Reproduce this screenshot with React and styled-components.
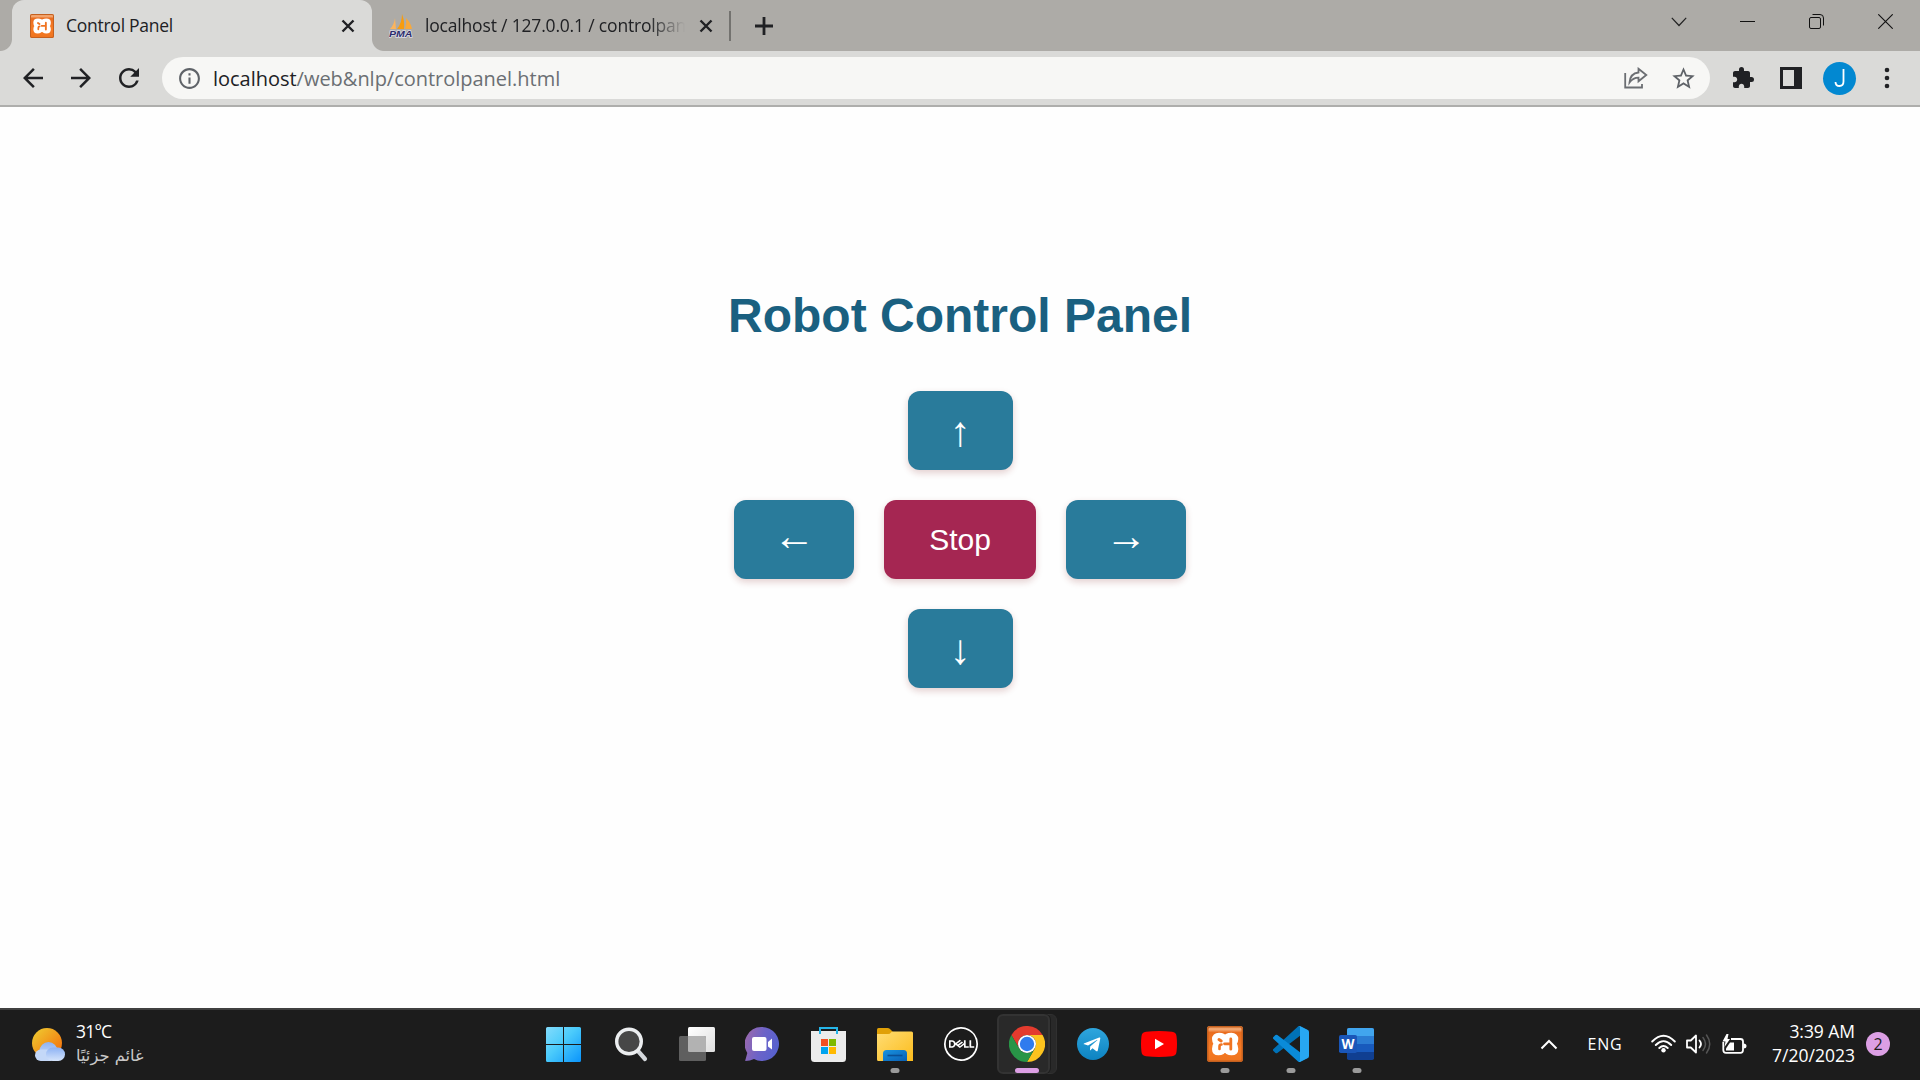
import React from "react";
import styled, { createGlobalStyle, css } from "styled-components";
import {
  MdArrowBack,
  MdArrowForward,
  MdRefresh,
  MdInfoOutline,
  MdStarBorder,
  MdExtension,
} from "react-icons/md";
import { FaTelegramPlane } from "react-icons/fa";
import { SiDell } from "react-icons/si";

const Global = createGlobalStyle`
  * { box-sizing: border-box; }
  body { margin: 0; background: #fff; overflow: hidden; }
  svg { display: block; flex: none; }
`;

const uiFont = `"Open Sans", "Noto Sans", "DejaVu Sans", sans-serif`;

const Screen = styled.div`
  width: 1920px;
  height: 1080px;
  display: flex;
  flex-direction: column;
  font-family: ${uiFont};
`;

/* ---------- browser chrome ---------- */
const TabStrip = styled.div`
  height: 51px;
  background: #adaba7;
  display: flex;
  padding-left: 12px;
  flex: none;
`;

const Tab = styled.div`
  position: relative;
  width: ${(p) => (p.$active ? 360 : 357)}px;
  height: 51px;
  display: flex;
  align-items: center;
  padding: 0 ${(p) => (p.$active ? 15 : 14)}px 0 ${(p) => (p.$active ? 18 : 17)}px;
  color: #202124;
  ${(p) =>
    p.$active &&
    css`
      background: #dadad8;
      border-radius: 12px 12px 0 0;
      &::before,
      &::after {
        content: "";
        position: absolute;
        bottom: 0;
        width: 12px;
        height: 12px;
      }
      &::before {
        left: -12px;
        background: radial-gradient(circle at 0 0, transparent 11.5px, #dadad8 12.5px);
      }
      &::after {
        right: -12px;
        background: radial-gradient(circle at 100% 0, transparent 11.5px, #dadad8 12.5px);
      }
    `}
`;

const TabTitle = styled.span`
  flex: 1;
  margin: 0 12px 0 12px;
  font-size: 17.5px;
  line-height: 51px;
  letter-spacing: ${(p) => p.$spacing}px;
  white-space: nowrap;
  overflow: hidden;
  ${(p) =>
    p.$fade &&
    css`
      mask-image: linear-gradient(to right, #000 86%, transparent 100%);
    `}
`;

const TabClose = styled.span`
  width: 18px;
  display: flex;
  justify-content: center;
`;

const TabDivider = styled.span`
  width: 2px;
  height: 30px;
  margin-top: 11px;
  background: #73726f;
`;

const NewTab = styled.span`
  width: 65px;
  height: 51px;
  display: flex;
  align-items: center;
  justify-content: center;
`;

const WindowControls = styled.div`
  margin-left: auto;
  display: flex;
`;

const WindowButton = styled.span`
  width: 69px;
  height: 43px;
  display: flex;
  align-items: center;
  justify-content: center;
`;

const Toolbar = styled.div`
  height: 56px;
  flex: none;
  display: flex;
  align-items: center;
  padding: 0 9px;
  background: #dadad8;
  border-bottom: 2px solid #aeaeac;
`;

const ToolButton = styled.span`
  width: 48px;
  height: 42px;
  display: flex;
  align-items: center;
  justify-content: center;
  color: #202124;
`;

const AddressBar = styled.div`
  flex: 1;
  height: 42px;
  margin: 0 9px;
  padding: 0 4px 0 15px;
  border-radius: 21px;
  background: #f7f7f5;
  display: flex;
  align-items: center;
  color: #5f6368;
`;

const Url = styled.span`
  flex: 1;
  margin-left: 11px;
  font-size: 20px;
  line-height: 42px;
  padding-top: 1px;
  letter-spacing: -0.02px;
  color: #6b6f73;
  b {
    font-weight: 400;
    color: #202124;
  }
`;

const BarIcon = styled.span`
  width: ${(p) => p.$w || 48}px;
  display: flex;
  justify-content: center;
`;

const Avatar = styled.span`
  width: 33px;
  height: 33px;
  border-radius: 50%;
  background: #0288d1;
  display: flex;
  align-items: center;
  justify-content: center;
`;

/* ---------- page ---------- */
const Page = styled.main`
  flex: 1;
  display: flex;
  flex-direction: column;
  align-items: center;
  padding-top: 181px;
  background: #fefefe;
  font-family: "Liberation Sans", Arial, sans-serif;
`;

const Title = styled.h1`
  margin: 0 0 48px;
  font-size: 48px;
  line-height: 55px;
  color: #1a6080;
`;

const Pad = styled.div`
  display: flex;
  flex-direction: column;
  align-items: center;
  gap: 30px;
`;

const PadRow = styled.div`
  display: flex;
  gap: 30px;
`;

const PadButton = styled.button`
  display: flex;
  align-items: center;
  justify-content: center;
  width: 120px;
  height: 79px;
  padding: 0 0 8px;
  border: 0;
  border-radius: 12px;
  background: #297b9b;
  color: #fff;
  font: 42px/46px "Liberation Sans", Arial, sans-serif;
  box-shadow: 0 3px 7px rgba(120, 20, 20, 0.2);
`;

const VerticalButton = styled(PadButton)`
  width: 105px;
  padding: 2px 0 0;
`;

const StopButton = styled(PadButton)`
  width: 152px;
  padding: 0;
  background: #a52652;
  font-size: 30px;
`;

/* ---------- taskbar ---------- */
const Taskbar = styled.footer`
  height: 72px;
  flex: none;
  display: grid;
  grid-template-columns: 532px 858px 1fr;
  background: #1c1c1c;
  border-top: 2px solid #404040;
  color: #fff;
`;

const Weather = styled.div`
  display: flex;
  align-items: center;
  height: 69px;
  padding: 0 0 0 32px;
  gap: 10px;
`;

const Stack = styled.div`
  display: flex;
  flex-direction: column;
  align-items: ${(p) => p.$align || "flex-start"};
  padding-bottom: 2px;
  font-size: 17.5px;
  line-height: 24px;
`;

const Line = styled.span`
  letter-spacing: ${(p) => p.$spacing || 0}px;
  white-space: nowrap;
`;

const Arabic = styled.span`
  padding-top: 1px;
  font: 16.3px/24px "DejaVu Sans", sans-serif;
  color: #c8c8c8;
`;

const Apps = styled.div`
  display: grid;
  grid-template-columns: repeat(13, 66px);
`;

const AppCell = styled.div`
  position: relative;
  height: 70px;
  display: flex;
  align-items: center;
  justify-content: center;
  padding-bottom: 2px;
  padding-right: ${(p) => (p.$nudge || 0) * 2}px;
`;

const Indicator = styled.i`
  position: absolute;
  bottom: 7px;
  left: 50%;
  transform: translateX(-50%);
  width: ${(p) => (p.$active ? 24 : 9)}px;
  height: 5px;
  border-radius: 3px;
  background: ${(p) => (p.$active ? "#dc9fe4" : "#9a9a9a")};
`;

const ActivePlate = styled.i`
  position: absolute;
  top: 4px;
  left: 3px;
  width: 53px;
  height: 60px;
  border-radius: 6px;
  background: #292929;
  border: 2px solid #333;
  box-shadow: 1px 0 0 #1c1c1c;
`;

const BackPlate = styled.i`
  position: absolute;
  top: 4px;
  left: 20px;
  width: 43px;
  height: 60px;
  border-radius: 6px;
  background: #292929;
  border: 1px solid #303030;
`;

const AppGlyph = styled.span`
  position: relative;
  display: flex;
`;

const XamppTile = styled.span`
  width: ${(p) => p.$size}px;
  height: ${(p) => p.$size}px;
  display: flex;
  align-items: center;
  justify-content: center;
  border-radius: ${(p) => p.$size / 12}px;
  background: linear-gradient(#ef9a5f 0, #f3a873 10%, #ea6d1f 18%, #f77b24 60%, #ee7420 100%);
  box-shadow: inset 0 0 0 ${(p) => p.$size / 24}px #c4601f;
`;

const Tray = styled.div`
  display: flex;
  align-items: center;
  height: 68px;
  padding-left: 150px;
`;

const TrayItem = styled.span`
  width: ${(p) => p.$w}px;
  display: flex;
  justify-content: center;
`;

const Clock = styled(Stack)`
  width: 109px;
`;

const Badge = styled.span`
  width: 24px;
  height: 24px;
  margin-left: 11px;
  border-radius: 50%;
  background: #dc9fe4;
  color: #1c1c1c;
  font-size: 16px;
  line-height: 24px;
  text-align: center;
`;

/* ---------- drawings ---------- */
const Cross = () => (
  <svg width="14" height="14" viewBox="0 0 14 14">
    <path d="M1.500 1.500l11 11M12.500 1.500l-11 11" stroke="#202124" strokeWidth="2.400" />
  </svg>
);

const Xampp = ({ size }) => (
  <XamppTile $size={size}>
    <svg width={size} height={size} viewBox="0 0 36 36">
      <path
        d="M18 12.500C17 9.500 14.500 9 12 9C8.800 9 7.300 10.800 7.300 13C7.300 15.500 8 16.500 9 18C7.500 19.500 7.300 21 7.300 23C7.300 25.700 9 27 11.500 27C14.500 27 16.500 26 18 22.800C19.500 26 21.500 27 24.500 27C27.300 27 29 25.700 29 23C29 21 28.700 19.500 27.200 18C28.200 16.500 29 15.500 29 13C29 10.800 27.200 9 24.500 9C21.500 9 19 9.500 18 12.500Z"
        fill="#fff"
        stroke="#fff"
        strokeWidth="4.600"
        strokeLinejoin="round"
      />
      <g fill="none" stroke="#f07422" strokeLinecap="round" strokeLinejoin="round">
        <path d="M12 13.500L14.200 15" strokeWidth="3" />
        <path d="M12.500 23V20.500Q12.500 18.500 14.500 18.500" strokeWidth="2.600" />
        <path d="M17.500 17.800H23.500M23.800 13V23.200" strokeWidth="2.800" />
      </g>
    </svg>
  </XamppTile>
);

const PmaIcon = () => (
  <svg width="24" height="24" viewBox="0 0 24 24">
    <path d="M6 4L7 15H1Q5 11 6 4Z" fill="#fbb45c" />
    <path d="M13 0Q16 8 15 15H8Q13 9 13 0Z" fill="#f89c0e" />
    <path d="M17 4Q22 9 23 15H16Q18 9 17 4Z" fill="#f9a93a" />
    <text x="0" y="22.500" textLength="23.500" lengthAdjust="spacingAndGlyphs" fontFamily="Liberation Sans, sans-serif" fontSize="9.500" fontWeight="700" fontStyle="italic" fill="#2c2c6c" stroke="#dcdce6" strokeWidth="1.400" paintOrder="stroke">PMA</text>
  </svg>
);

const ShareIcon = () => (
  <svg width="24" height="22" viewBox="0 0 24 22" fill="none" stroke="#6b6e72" strokeWidth="1.800">
    <path d="M1.200 6V20.500H18V17" />
    <path d="M14.500 1.800L22.300 8L14.500 14.300V10.600C10.500 10.600 8 12 5.500 15.500C6 9.500 9.500 6 14.500 5.500Z" />
  </svg>
);

const WeatherIcon = () => (
  <svg width="34" height="34" viewBox="0 0 34 34">
    <defs>
      <linearGradient id="sun" x1="0" y1="0" x2="1" y2="1">
        <stop offset="0.1" stopColor="#efc52e" />
        <stop offset="0.9" stopColor="#f4700c" />
      </linearGradient>
      <linearGradient id="cloud" x1="0" y1="0" x2="0" y2="1">
        <stop offset="0" stopColor="#8db2f4" />
        <stop offset="1" stopColor="#d5e4fb" />
      </linearGradient>
    </defs>
    <circle cx="15" cy="15" r="15" fill="url(#sun)" />
    <circle cx="16.500" cy="23" r="9" fill="url(#cloud)" />
    <rect x="3" y="21.500" width="21" height="11.500" rx="5.700" fill="#c4d8f8" />
    <rect x="14" y="19.500" width="19" height="13.500" rx="6.700" fill="url(#cloud)" />
  </svg>
);

const StartIcon = () => (
  <svg width="35" height="35" viewBox="0 0 35 35">
    <defs>
      <linearGradient id="win" gradientUnits="userSpaceOnUse" x1="0" y1="0" x2="35" y2="35">
        <stop offset="0" stopColor="#83dcfc" />
        <stop offset="0.45" stopColor="#4bcbfb" />
        <stop offset="1" stopColor="#0a94fb" />
      </linearGradient>
    </defs>
    <path fill="url(#win)" d="M1.500 0H17V17H0V1.500Q0 0 1.500 0ZM18 0H33.500Q35 0 35 1.500V17H18ZM0 18H17V35H1.500Q0 35 0 33.500ZM18 18H35V33.500Q35 35 33.500 35H18Z" />
  </svg>
);

const SearchIcon = () => (
  <svg width="33" height="35" viewBox="0 0 33 35">
    <path d="M23 24L30 32" stroke="#d4d8dc" strokeWidth="4.200" strokeLinecap="round" />
    <circle cx="14" cy="14.500" r="12.300" fill="#474747" stroke="#eceef0" strokeWidth="3.400" />
  </svg>
);

const TaskViewIcon = () => (
  <svg width="36" height="34" viewBox="0 0 36 34">
    <defs>
      <linearGradient id="tv" x1="0" y1="0" x2="1" y2="1">
        <stop offset="0" stopColor="#fff" />
        <stop offset="1" stopColor="#dedede" />
      </linearGradient>
    </defs>
    <rect x="9" y="0" width="27" height="25" rx="1.500" fill="url(#tv)" />
    <rect x="0" y="9" width="27" height="25" rx="1.500" fill="#5f5f5f" />
    <path d="M9 9H25.500Q27 9 27 10.500V25H10.500Q9 25 9 23.500Z" fill="#b2b2b2" />
  </svg>
);

const ChatIcon = () => (
  <svg width="34" height="34" viewBox="0 0 34 34">
    <defs>
      <linearGradient id="chat" x1="0" y1="0.300" x2="1" y2="0.600">
        <stop offset="0" stopColor="#9968ad" />
        <stop offset="0.500" stopColor="#6c63c8" />
        <stop offset="1" stopColor="#5561cf" />
      </linearGradient>
    </defs>
    <path d="M17 0A17 17 0 1 1 9 32Q5 34 0.500 34Q0 33.500 0.500 32.500L2.300 26A17 17 0 0 1 17 0Z" fill="url(#chat)" />
    <rect x="7" y="10" width="14.500" height="14" rx="2" fill="#fff" />
    <path d="M23 15L27 11.500V22.500L23 19.500Z" fill="#fff" />
  </svg>
);

const StoreIcon = () => (
  <svg width="35" height="35" viewBox="0 0 35 35">
    <path d="M0 4H35V31.500Q35 35 31.500 35H3.500Q0 35 0 31.500Z" fill="#ececec" />
    <path d="M9 7V1H26V7" fill="none" stroke="#25b5e8" strokeWidth="2" />
    <rect x="10" y="12" width="7" height="7" fill="#f25022" />
    <rect x="18" y="12" width="7" height="7" fill="#7fba00" />
    <rect x="10" y="20" width="7" height="7" fill="#00a4ef" />
    <rect x="18" y="20" width="7" height="7" fill="#ffb900" />
  </svg>
);

const FolderIcon = () => (
  <svg width="36" height="33" viewBox="0 0 36 33">
    <defs>
      <linearGradient id="fold" x1="0" y1="0" x2="1" y2="1">
        <stop offset="0" stopColor="#ffdd74" />
        <stop offset="1" stopColor="#fcbc1c" />
      </linearGradient>
      <linearGradient id="foldb" x1="0" y1="0" x2="1" y2="1">
        <stop offset="0" stopColor="#1893e0" />
        <stop offset="1" stopColor="#0a5fb4" />
      </linearGradient>
    </defs>
    <path d="M0 1.500Q0 0 1.500 0H10.500Q12 0 13 1L16 4V8H0Z" fill="#e0a007" />
    <path d="M0 6H11Q13 6 14 4.500Q15 3.500 16 3.500H34.500Q36 3.500 36 5V33H1.500Q0 33 0 31.500Z" fill="url(#fold)" />
    <path d="M6 33V25.500Q6 22 9.500 22H26.500Q30 22 30 25.500V33Z" fill="url(#foldb)" />
    <path d="M10.500 27.500H25.500" stroke="#0a4f95" strokeWidth="1.600" />
  </svg>
);

const ChromeIcon = () => (
  <svg width="36" height="36" viewBox="0 0 36 36">
    <path d="M2.400 9A18 18 0 0 1 33.600 9H18A9 9 0 0 0 10.200 22.500Z" fill="#e33b2e" />
    <path d="M33.600 9A18 18 0 0 1 18 36L25.800 22.500A9 9 0 0 0 18 9Z" fill="#fcc31e" />
    <path d="M18 36A18 18 0 0 1 2.400 9L10.200 22.500A9 9 0 0 0 25.800 22.500Z" fill="#289547" />
    <circle cx="18" cy="18" r="9" fill="#fff" />
    <circle cx="18" cy="18" r="7.200" fill="#2f7bee" />
  </svg>
);

const TelegramIcon = () => (
  <svg width="32" height="32" viewBox="0 0 32 32">
    <defs>
      <linearGradient id="tg" x1="0" y1="0" x2="0" y2="1">
        <stop offset="0" stopColor="#2fa6de" />
        <stop offset="1" stopColor="#0d83c1" />
      </linearGradient>
    </defs>
    <circle cx="16" cy="16" r="16" fill="url(#tg)" />
    <g transform="translate(5.500 7)">
      <FaTelegramPlane size={19} color="#fff" />
    </g>
  </svg>
);

const YouTubeIcon = () => (
  <svg width="36" height="26" viewBox="0 0 36 26">
    <path d="M5 .8Q18-.6 31 .8Q35 1.200 35.500 5Q36.500 13 35.500 21Q35 24.800 31 25.200Q18 26.600 5 25.200Q1 24.800.5 21Q-.5 13 .5 5Q1 1.200 5 .8Z" fill="#f00" />
    <path d="M14 7.800V18.200L23 13Z" fill="#fff" />
  </svg>
);

const CodeIcon = () => (
  <svg width="36" height="36" viewBox="0 0 100 100">
    <path fill="#0072b8" d="M96.461 10.796L75.857.876A6.230 6.230 0 0 0 68.750 2.083L1.299 63.583A4.167 4.167 0 0 0 1.303 69.745L6.813 74.754A4.167 4.167 0 0 0 12.134 74.991L93.361 13.370C96.086 11.303 100 13.246 100 16.667V16.427A6.250 6.250 0 0 0 96.461 10.796Z" />
    <path fill="#0a8bd9" d="M96.461 89.204L75.857 99.124A6.230 6.230 0 0 1 68.750 97.917L1.299 36.417A4.167 4.167 0 0 1 1.303 30.255L6.813 25.246A4.167 4.167 0 0 1 12.134 25.009L93.361 86.630C96.086 88.697 100 86.754 100 83.333V83.573A6.250 6.250 0 0 1 96.461 89.204Z" />
    <path fill="#27a7f2" d="M75.858 99.126A6.230 6.230 0 0 1 68.750 97.917C71.056 100.223 75 98.590 75 95.328V4.672C75 1.410 71.056-.223 68.750 2.083A6.230 6.230 0 0 1 75.858.874L96.459 10.781A6.250 6.250 0 0 1 100 16.413V83.587A6.250 6.250 0 0 1 96.459 89.220Z" />
  </svg>
);

const WordIcon = () => (
  <svg width="35" height="32" viewBox="0 0 35 32">
    <rect x="8" y="0" width="27" height="32" rx="1.800" fill="#103f91" />
    <path d="M8 8V1.800Q8 0 9.800 0H33.200Q35 0 35 1.800V8Z" fill="#41a5ee" />
    <rect x="8" y="8" width="27" height="8" fill="#2b7cd3" />
    <rect x="8" y="16" width="27" height="8" fill="#185abd" />
    <rect x="0" y="7" width="18" height="18" rx="1.800" fill="#1a56b8" />
    <text x="9" y="20.500" textAnchor="middle" textLength="13" lengthAdjust="spacingAndGlyphs" fontFamily="Open Sans, sans-serif" fontSize="13.500" fontWeight="700" fill="#fff">W</text>
  </svg>
);

const WifiIcon = () => (
  <svg width="25" height="20" viewBox="0 0 25 20" fill="none" stroke="#fff" strokeWidth="1.900" strokeLinecap="round">
    <path d="M1.200 7.500Q12.500-4 23.800 7.500M4.800 11Q12.500 3.200 20.200 11M8.300 14Q12.500 10 16.700 14" />
    <circle cx="12.500" cy="16.300" r="2.200" fill="#fff" stroke="none" />
  </svg>
);

const SpeakerIcon = () => (
  <svg width="25" height="22" viewBox="0 0 25 22" fill="none" stroke="#fff" strokeWidth="1.800" strokeLinejoin="round" strokeLinecap="round">
    <path d="M1 7.500H4.800L10 2.500V19.500L4.800 14.500H1Z" />
    <path d="M13.500 7.500Q16.500 11 13.500 14.500" />
    <path d="M17 4.500Q22 11 17 17.500M20.500 2Q27 11 20.500 20" stroke="#555" strokeWidth="1.500" />
  </svg>
);

const BatteryIcon = () => (
  <svg width="25" height="21" viewBox="0 0 25 21">
    <path d="M9 5H18.500Q21 5 21 7.500V16Q21 18.800 18.500 18.800H4Q1.300 18.800 1.300 16V8" fill="none" stroke="#fff" strokeWidth="1.800" />
    <path d="M21.500 9.500Q24.500 9.500 24.500 12T21.500 14.500Z" fill="#fff" />
    <path d="M4.500 0L.5 7.500H3.500L2.500 13L8 5H5.500L6.500 0Z" fill="#fff" />
    <path d="M8 8.500H12V16.500H4V14.500Z" fill="#fff" />
  </svg>
);

const apps = [
  { id: "start", icon: <StartIcon />, nudge: 2 },
  { id: "search", icon: <SearchIcon /> },
  { id: "tasks", icon: <TaskViewIcon /> },
  { id: "chat", icon: <ChatIcon />, nudge: 1 },
  { id: "store", icon: <StoreIcon />, nudge: 1 },
  { id: "files", icon: <FolderIcon />, open: true },
  { id: "dell", icon: <SiDell size={34} color="#fff" /> },
  { id: "chrome", icon: <ChromeIcon />, open: true, active: true },
  { id: "telegram", icon: <TelegramIcon /> },
  { id: "youtube", icon: <YouTubeIcon /> },
  { id: "xampp", icon: <Xampp size={36} />, open: true },
  { id: "code", icon: <CodeIcon />, open: true },
  { id: "word", icon: <WordIcon />, open: true, nudge: 1 },
];

export default function App() {
  return (
    <Screen>
      <Global />
      <TabStrip>
        <Tab $active>
          <Xampp size={24} />
          <TabTitle $spacing={-0.26}>Control Panel</TabTitle>
          <TabClose><Cross /></TabClose>
        </Tab>
        <Tab>
          <PmaIcon />
          <TabTitle $fade $spacing={-0.18}>localhost / 127.0.0.1 / controlpanel</TabTitle>
          <TabClose><Cross /></TabClose>
        </Tab>
        <TabDivider />
        <NewTab>
          <svg width="18" height="18" viewBox="0 0 18 18">
            <path d="M9 0V18M0 9H18" stroke="#202124" strokeWidth="2.800" />
          </svg>
        </NewTab>
        <WindowControls>
          <WindowButton>
            <svg width="16" height="10" viewBox="0 0 16 10"><path d="M.8.8L8 8.500L15.200.8" fill="none" stroke="#222" strokeWidth="1.200" /></svg>
          </WindowButton>
          <WindowButton>
            <svg width="15" height="1" viewBox="0 0 15 1"><rect width="15" height="1" fill="#111" /></svg>
          </WindowButton>
          <WindowButton>
            <svg width="15" height="15" viewBox="0 0 15 15" fill="none" stroke="#111">
              <rect x=".5" y="3.500" width="11" height="11" rx="1.500" />
              <path d="M3.500.5H11Q14.500.5 14.500 4V11.500" />
            </svg>
          </WindowButton>
          <WindowButton>
            <svg width="15" height="15" viewBox="0 0 15 15"><path d="M.3.3L14.700 14.700M14.700.3L.3 14.700" stroke="#111" strokeWidth="1.100" /></svg>
          </WindowButton>
        </WindowControls>
      </TabStrip>

      <Toolbar>
        <ToolButton><MdArrowBack size={30} /></ToolButton>
        <ToolButton><MdArrowForward size={30} /></ToolButton>
        <ToolButton><MdRefresh size={30} /></ToolButton>
        <AddressBar>
          <MdInfoOutline size={25} />
          <Url><b>localhost</b>/web&amp;nlp/controlpanel.html</Url>
          <BarIcon><ShareIcon /></BarIcon>
          <BarIcon $w={46}><MdStarBorder size={27} /></BarIcon>
        </AddressBar>
        <ToolButton><MdExtension size={24} /></ToolButton>
        <ToolButton>
          <svg width="22" height="22" viewBox="0 0 22 22">
            <path d="M1.500 1.500H20.500V20.500H1.500Z" fill="none" stroke="#202124" strokeWidth="3" />
            <rect x="14" y="1" width="7" height="20" fill="#202124" />
          </svg>
        </ToolButton>
        <ToolButton>
          <Avatar>
            <svg width="11" height="20" viewBox="0 0 11 20"><path d="M9.500 1V13.500Q9.500 18 5.500 18Q1.500 18 1.500 14" fill="none" stroke="#fff" strokeWidth="1.800" /></svg>
          </Avatar>
        </ToolButton>
        <ToolButton>
          <svg width="6" height="22" viewBox="0 0 6 22" fill="#202124">
            <circle cx="3" cy="3" r="2.300" /><circle cx="3" cy="11" r="2.300" /><circle cx="3" cy="19" r="2.300" />
          </svg>
        </ToolButton>
      </Toolbar>

      <Page>
        <Title>Robot Control Panel</Title>
        <Pad>
          <VerticalButton>↑</VerticalButton>
          <PadRow>
            <PadButton>←</PadButton>
            <StopButton>Stop</StopButton>
            <PadButton>→</PadButton>
          </PadRow>
          <VerticalButton>↓</VerticalButton>
        </Pad>
      </Page>

      <Taskbar>
        <Weather>
          <WeatherIcon />
          <Stack>
            <Line $spacing={-0.8}>31°C</Line>
            <Arabic dir="rtl">غائم جزئيًا</Arabic>
          </Stack>
        </Weather>
        <Apps>
          {apps.map((a) => (
            <AppCell key={a.id} $nudge={a.nudge}>
              {a.active && <BackPlate />}
              {a.active && <ActivePlate />}
              <AppGlyph>{a.icon}</AppGlyph>
              {a.open && <Indicator $active={a.active} />}
            </AppCell>
          ))}
        </Apps>
        <Tray>
          <svg width="18" height="11" viewBox="0 0 18 11">
            <path d="M1.500 9.500L9 2L16.500 9.500" fill="none" stroke="#fff" strokeWidth="2" />
          </svg>
          <TrayItem $w={94}><Line $spacing={0.8}>ENG</Line></TrayItem>
          <TrayItem $w={22}><WifiIcon /></TrayItem>
          <TrayItem $w={48}><SpeakerIcon /></TrayItem>
          <TrayItem $w={24}><BatteryIcon /></TrayItem>
          <Clock $align="flex-end">
            <Line $spacing={-0.05}>3:39 AM</Line>
            <Line>7/20/2023</Line>
          </Clock>
          <Badge>2</Badge>
        </Tray>
      </Taskbar>
    </Screen>
  );
}
